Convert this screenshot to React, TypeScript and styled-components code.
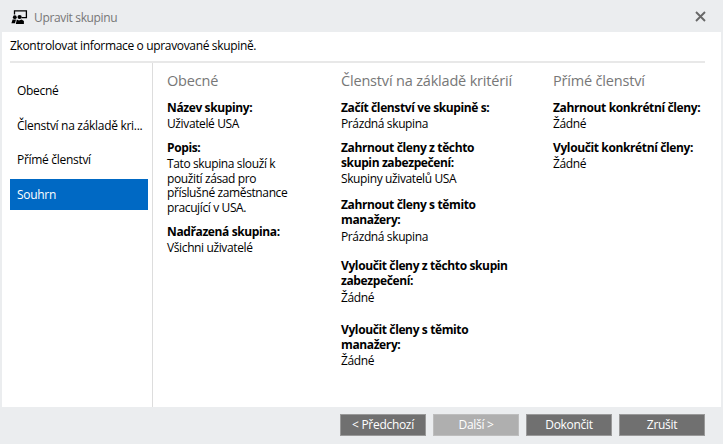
import React from "react";
import styled, { createGlobalStyle } from "styled-components";

const Global = createGlobalStyle`
  * { box-sizing: border-box; }
  body { margin: 0; background: #ebedef; font-family: "Open Sans", "Noto Sans", sans-serif; font-size: 12px; color: #000; }
`;

const Dialog = styled.div`
  width: 723px; height: 444px; display: flex; flex-direction: column;
  padding: 0 2px; background: #ebedef; overflow: hidden; white-space: nowrap;
`;
const TitleBar = styled.header`
  height: 32px; flex: none; display: flex; align-items: center; padding: 3px 15px 0 9px;
`;
const Title = styled.h1`
  margin: 0 auto 0 6px; font-size: 12px; font-weight: 400; line-height: 16px; color: #777;
  letter-spacing: -0.35px;
`;
const CloseButton = styled.button`
  border: 0; padding: 0; background: none; width: 11px; height: 11px; display: flex; margin-top: -3px;
`;
const Panel = styled.main`
  flex: none; height: 375px; background: #fff; display: flex; flex-direction: column; padding: 6px 16px 0 8px;
`;
const Intro = styled.p`
  margin: 0; height: 23px; line-height: 16px; letter-spacing: -0.34px;
`;
const Content = styled.div`
  flex: 1; display: flex; border-top: 2px solid #e8e8e8;
`;
const Nav = styled.nav`
  flex: none; width: 143px; border-right: 1px solid #ddd; padding: 12px 4px 0 0;
  display: flex; flex-direction: column;
`;
const NavItem = styled.a<{ $height: number; $active?: boolean }>`
  height: ${(p) => p.$height}px; line-height: ${(p) => p.$height}px; padding-left: 7px; letter-spacing: -0.3px;
  margin-top: ${(p) => (p.$active ? 5 : 0)}px;
  background: ${(p) => (p.$active ? "#0069c4" : "transparent")};
  color: ${(p) => (p.$active ? "#fff" : "#000")};
`;
const Summary = styled.div`
  flex: none; display: grid; grid-template-columns: 174px 212px 160px; padding: 9px 0 0 14px;
`;
const Heading = styled.h2`
  margin: 0 0 10px; height: 18px; line-height: 18px; font-size: 14.5px; font-weight: 400; color: #777;
  letter-spacing: -0.18px;
`;
const Field = styled.div<{ $after: number }>`
  margin-bottom: ${(p) => p.$after}px;
`;
const Label = styled.div`
  font-weight: 700; line-height: 15px; white-space: pre-line; letter-spacing: -0.38px;
`;
const Value = styled.div<{ $gap: number }>`
  margin-top: ${(p) => p.$gap}px; line-height: 14.5px; white-space: pre-line; letter-spacing: -0.38px;
`;
const Footer = styled.footer`
  flex: 1; display: flex; justify-content: flex-end; gap: 7px; padding: 7px 16px 0 0;
`;
const Button = styled.button<{ $off?: boolean }>`
  width: 86px; height: 22px; padding: 0; border: 1px solid ${(p) => (p.$off ? "#bdbdbd" : "#999")};
  background: ${(p) => (p.$off ? "#afafaf" : "#707070")}; color: #fff;
  font: 12px/18px "Open Sans", sans-serif; letter-spacing: -0.3px;
`;

const GroupIcon = () => (
  <svg width="17" height="15" viewBox="0 0 17 15">
    <path d="M3.5 4.5V0.8H15.4V7.6H10.5" fill="none" stroke="#000" strokeWidth="1.3" />
    <circle cx="3.8" cy="7.2" r="1.9" />
    <circle cx="8.6" cy="7" r="2.1" />
    <path d="M0.4 13.2L1.6 9.4H5L4 13.2ZM4.8 14L5.8 9.4L8 10.4L10.6 9.4L12.9 11V14Z" />
  </svg>
);

type Entry = { label: string; value: string; gap?: number; after?: number };
const columns: { title: string; entries: Entry[] }[] = [
  {
    title: "Obecné",
    entries: [
      { label: "Název skupiny:", value: "Uživatelé USA" },
      { label: "Popis:", value: "Tato skupina slouží k\npoužití zásad pro\npříslušné zaměstnance\npracující v USA.", after: 9 },
      { label: "Nadřazená skupina:", value: "Všichni uživatelé" },
    ],
  },
  {
    title: "Členství na základě kritérií",
    entries: [
      { label: "Začít členství ve skupině s:", value: "Prázdná skupina" },
      { label: "Zahrnout členy z těchto\nskupin zabezpečení:", value: "Skupiny uživatelů USA", after: 10.5 },
      { label: "Zahrnout členy s těmito\nmanažery:", value: "Prázdná skupina", gap: 3, after: 13.5 },
      { label: "Vyloučit členy z těchto skupin\nzabezpečení:", value: "Žádné", gap: 3, after: 16.5 },
      { label: "Vyloučit členy s těmito\nmanažery:", value: "Žádné" },
    ],
  },
  {
    title: "Přímé členství",
    entries: [
      { label: "Zahrnout konkrétní členy:", value: "Žádné" },
      { label: "Vyloučit konkrétní členy:", value: "Žádné" },
    ],
  },
];

export default function App() {
  return (
    <>
      <Global />
      <Dialog>
        <TitleBar>
          <GroupIcon />
          <Title>Upravit skupinu</Title>
          <CloseButton aria-label="Zavřít">
            <svg width="11" height="11" viewBox="0 0 11 11">
              <path d="M1 1L10 10M10 1L1 10" stroke="#686868" strokeWidth="1.9" />
            </svg>
          </CloseButton>
        </TitleBar>
        <Panel>
          <Intro>Zkontrolovat informace o upravované skupině.</Intro>
          <Content>
            <Nav>
              <NavItem $height={31}>Obecné</NavItem>
              <NavItem $height={39}>Členství na základě kri...</NavItem>
              <NavItem $height={29}>Přímé členství</NavItem>
              <NavItem $height={31} $active>Souhrn</NavItem>
            </Nav>
            <Summary>
              {columns.map((c) => (
                <section key={c.title}>
                  <Heading>{c.title}</Heading>
                  {c.entries.map((e) => (
                    <Field key={e.label} $after={e.after ?? 8.5}>
                      <Label>{e.label}</Label>
                      <Value $gap={e.gap ?? 2}>{e.value}</Value>
                    </Field>
                  ))}
                </section>
              ))}
            </Summary>
          </Content>
        </Panel>
        <Footer>
          <Button>&lt; Předchozí</Button>
          <Button $off>Další &gt;</Button>
          <Button>Dokončit</Button>
          <Button>Zrušit</Button>
        </Footer>
      </Dialog>
    </>
  );
}
